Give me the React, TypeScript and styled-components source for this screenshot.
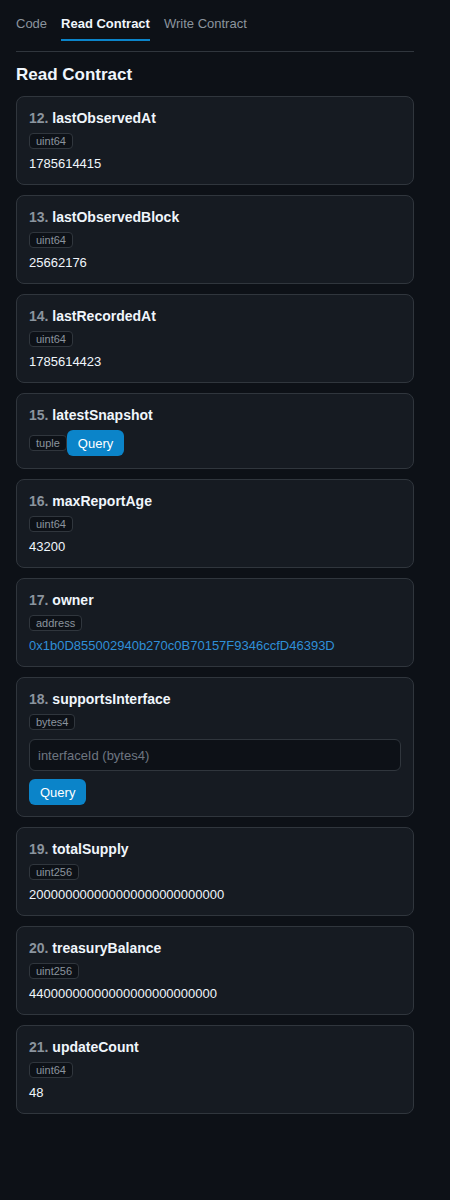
import React from "react";
import styled, { createGlobalStyle } from "styled-components";

const GlobalStyle = createGlobalStyle`
  html, body {
    margin: 0;
    padding: 0;
    background: #0d1117;
  }
  body {
    font-family: "Liberation Sans", Arial, sans-serif;
    color: #e6edf3;
  }
`;

const Page = styled.div`
  width: 398px;
  padding: 15px 36px 80px 16px;
`;

const TabBar = styled.div`
  display: flex;
  gap: 14px;
  margin-bottom: 10px;
`;

const Tab = styled.div<{ active?: boolean }>`
  font-size: 13px;
  line-height: 16px;
  padding-top: 1px;
  padding-bottom: 7px;
  color: ${(p) => (p.active ? "#f0f6fc" : "#8b949e")};
  font-weight: ${(p) => (p.active ? 700 : 400)};
  border-bottom: 2px solid ${(p) => (p.active ? "#0b84c9" : "transparent")};
`;

const Divider = styled.div`
  height: 1px;
  background: #30363d;
`;

const Heading = styled.h2`
  margin: 13px 0 11px;
  font-size: 17px;
  line-height: 20px;
  font-weight: 700;
  color: #f0f6fc;
`;

const List = styled.div`
  display: flex;
  flex-direction: column;
  gap: 10px;
`;

const Card = styled.div`
  background: #161b22;
  border: 1px solid #30363d;
  border-radius: 8px;
  padding: 12px 12px 11px;
  display: flex;
  flex-direction: column;
  align-items: flex-start;
`;

const Title = styled.div`
  font-size: 14px;
  line-height: 18px;
  font-weight: 700;
  color: #f0f6fc;
  margin-bottom: 6px;
`;

const Index = styled.span`
  color: #8b949e;
`;

const Badge = styled.span`
  display: inline-block;
  font-size: 11px;
  line-height: 14px;
  padding: 0 6px;
  color: #8b949e;
  background: #0d1117;
  border: 1px solid #30363d;
  border-radius: 4px;
`;

const Value = styled.div<{ link?: boolean }>`
  margin-top: 6px;
  font-size: 13px;
  line-height: 18px;
  color: ${(p) => (p.link ? "#2f8fd8" : "#f0f6fc")};
`;

const InlineRow = styled.div`
  display: flex;
  align-items: center;
  margin-bottom: 1px;
`;

const QueryButton = styled.button`
  height: 26px;
  padding: 0 11px;
  border: none;
  border-radius: 6px;
  background: #0b84c9;
  color: #ffffff;
  font-family: "Liberation Sans", Arial, sans-serif;
  font-size: 13px;
`;

const Input = styled.input`
  box-sizing: border-box;
  width: 100%;
  height: 32px;
  margin: 9px 0 8px;
  padding: 0 8px;
  background: #0d1117;
  border: 1px solid #30363d;
  border-radius: 6px;
  color: #e6edf3;
  font-family: "Liberation Sans", Arial, sans-serif;
  font-size: 13px;
  &::placeholder {
    color: #6e7681;
  }
`;

type Item = {
  n: number;
  name: string;
  type: string;
  value?: string;
  link?: boolean;
  kind?: "tuple" | "input";
  input?: string;
};

const items: Item[] = [
  { n: 12, name: "lastObservedAt", type: "uint64", value: "1785614415" },
  { n: 13, name: "lastObservedBlock", type: "uint64", value: "25662176" },
  { n: 14, name: "lastRecordedAt", type: "uint64", value: "1785614423" },
  { n: 15, name: "latestSnapshot", type: "tuple", kind: "tuple" },
  { n: 16, name: "maxReportAge", type: "uint64", value: "43200" },
  {
    n: 17,
    name: "owner",
    type: "address",
    value: "0x1b0D855002940b270c0B70157F9346ccfD46393D",
    link: true,
  },
  {
    n: 18,
    name: "supportsInterface",
    type: "bytes4",
    kind: "input",
    input: "interfaceId (bytes4)",
  },
  { n: 19, name: "totalSupply", type: "uint256", value: "200000000000000000000000000" },
  { n: 20, name: "treasuryBalance", type: "uint256", value: "44000000000000000000000000" },
  { n: 21, name: "updateCount", type: "uint64", value: "48" },
];

const FunctionCard = ({ item }: { item: Item }) => (
  <Card>
    <Title>
      <Index>{item.n}.</Index> {item.name}
    </Title>
    {item.kind === "tuple" ? (
      <InlineRow>
        <Badge>{item.type}</Badge>
        <QueryButton>Query</QueryButton>
      </InlineRow>
    ) : (
      <Badge>{item.type}</Badge>
    )}
    {item.kind === "input" && (
      <>
        <Input placeholder={item.input} />
        <QueryButton>Query</QueryButton>
      </>
    )}
    {item.value && <Value link={item.link}>{item.value}</Value>}
  </Card>
);

const App = () => {
  return (
    <>
      <GlobalStyle />
      <Page>
        <TabBar>
          <Tab>Code</Tab>
          <Tab active>Read Contract</Tab>
          <Tab>Write Contract</Tab>
        </TabBar>
        <Divider />
        <Heading>Read Contract</Heading>
        <List>
          {items.map((item) => (
            <FunctionCard key={item.n} item={item} />
          ))}
        </List>
      </Page>
    </>
  );
};

export default App;
